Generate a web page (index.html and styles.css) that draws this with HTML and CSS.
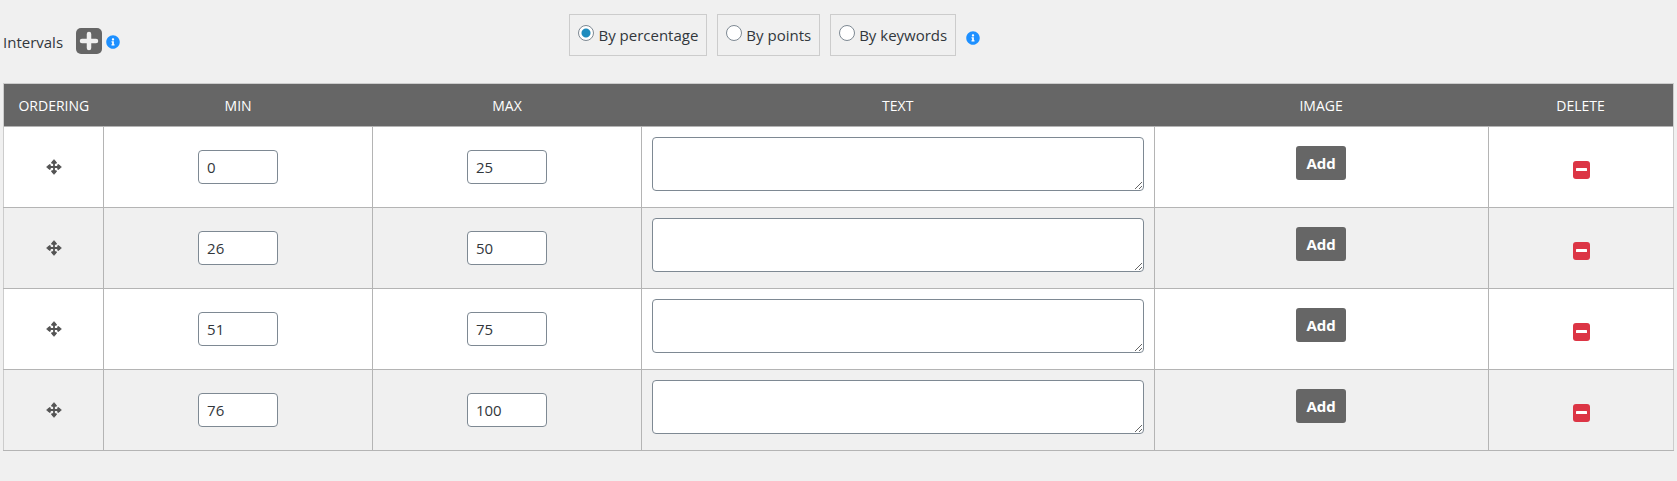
FILE: index.html
```html
<!DOCTYPE html>
<html lang="en">
<head>
<meta charset="utf-8">
<title>Intervals</title>
<link rel="stylesheet" href="styles.css">
</head>
<body>
<svg class="sprite" aria-hidden="true">
  <symbol id="info" viewBox="0 0 512 512"><circle cx="256" cy="256" r="240" fill="#fff"/><path fill="currentColor" d="M256 8C119.043 8 8 119.083 8 256c0 136.997 111.043 248 248 248s248-111.003 248-248C504 119.083 392.957 8 256 8zm0 110c23.196 0 42 18.804 42 42s-18.804 42-42 42-42-18.804-42-42 18.804-42 42-42zm56 254c0 6.627-5.373 12-12 12h-88c-6.627 0-12-5.373-12-12v-24c0-6.627 5.373-12 12-12h12v-64h-12c-6.627 0-12-5.373-12-12v-24c0-6.627 5.373-12 12-12h64c6.627 0 12 5.373 12 12v100h12c6.627 0 12 5.373 12 12v24z"/></symbol>
  <symbol id="move" viewBox="0 0 16 16"><path d="M8 2v12M2 8h12" stroke="currentColor" stroke-width="1.800"/><path fill="currentColor" stroke="currentColor" stroke-width="1" stroke-linejoin="round" d="M8 .7l2.300 2.600v.9H5.700v-.9zM8 15.300l2.300-2.600v-.9H5.700v.9zM.7 8l2.600-2.300h.9v4.600h-.9zM15.300 8l-2.600-2.300h-.9v4.600h.9z"/></symbol>
  <symbol id="plus" viewBox="0 0 26 26"><rect width="26" height="26" rx="5" fill="currentColor"/><path d="M13 5.500v15M5.500 13h15" stroke="#f0f0f0" stroke-width="4"/><path d="M13 6v14M6 13h14" stroke="#f0f0f0" stroke-width="4.500" stroke-linecap="round"/></symbol>
  <symbol id="minus" viewBox="0 0 18 18"><rect x="1" width="17" height="18" rx="3" fill="currentColor"/><rect x="4" y="7" width="11" height="3" rx="0.500" fill="#fff"/></symbol>
</svg>
<main class="page">
  <header class="toolbar">
    <div class="title">
      <span class="title-text">Intervals</span>
      <button class="icon-button" type="button" aria-label="Add interval"><svg class="icon-plus"><use href="#plus"/></svg></button>
      <a class="info" href="#" aria-label="About intervals"><svg class="icon-info"><use href="#info"/></svg></a>
    </div>
    <div class="modes">
      <label class="mode"><input class="radio" type="radio" name="mode" checked><span>By percentage</span></label>
      <label class="mode"><input class="radio" type="radio" name="mode"><span>By points</span></label>
      <label class="mode"><input class="radio" type="radio" name="mode"><span>By keywords</span></label>
      <a class="info" href="#" aria-label="About calculation modes"><svg class="icon-info"><use href="#info"/></svg></a>
    </div>
  </header>
  <table class="intervals">
    <colgroup><col class="col-order"><col class="col-number"><col class="col-number"><col class="col-text"><col class="col-image"><col class="col-delete"></colgroup>
    <thead>
      <tr><th>ORDERING</th><th>MIN</th><th>MAX</th><th>TEXT</th><th>IMAGE</th><th>DELETE</th></tr>
    </thead>
    <tbody>
      <tr>
        <td><svg class="icon-move"><use href="#move"/></svg></td>
        <td><input class="number" type="text" value="0" aria-label="Min"></td>
        <td><input class="number" type="text" value="25" aria-label="Max"></td>
        <td><textarea class="text" aria-label="Text"></textarea></td>
        <td class="image-cell"><button class="add" type="button">Add</button></td>
        <td class="delete-cell"><button class="icon-button" type="button" aria-label="Delete"><svg class="icon-minus"><use href="#minus"/></svg></button></td>
      </tr>
      <tr>
        <td><svg class="icon-move"><use href="#move"/></svg></td>
        <td><input class="number" type="text" value="26" aria-label="Min"></td>
        <td><input class="number" type="text" value="50" aria-label="Max"></td>
        <td><textarea class="text" aria-label="Text"></textarea></td>
        <td class="image-cell"><button class="add" type="button">Add</button></td>
        <td class="delete-cell"><button class="icon-button" type="button" aria-label="Delete"><svg class="icon-minus"><use href="#minus"/></svg></button></td>
      </tr>
      <tr>
        <td><svg class="icon-move"><use href="#move"/></svg></td>
        <td><input class="number" type="text" value="51" aria-label="Min"></td>
        <td><input class="number" type="text" value="75" aria-label="Max"></td>
        <td><textarea class="text" aria-label="Text"></textarea></td>
        <td class="image-cell"><button class="add" type="button">Add</button></td>
        <td class="delete-cell"><button class="icon-button" type="button" aria-label="Delete"><svg class="icon-minus"><use href="#minus"/></svg></button></td>
      </tr>
      <tr>
        <td><svg class="icon-move"><use href="#move"/></svg></td>
        <td><input class="number" type="text" value="76" aria-label="Min"></td>
        <td><input class="number" type="text" value="100" aria-label="Max"></td>
        <td><textarea class="text" aria-label="Text"></textarea></td>
        <td class="image-cell"><button class="add" type="button">Add</button></td>
        <td class="delete-cell"><button class="icon-button" type="button" aria-label="Delete"><svg class="icon-minus"><use href="#minus"/></svg></button></td>
      </tr>
    </tbody>
  </table>
</main>
</body>
</html>
```
FILE: styles.css
```css
* { box-sizing: border-box; }
body {
  margin: 0;
  background: #f0f0f0;
  color: #32373c;
  font: 15px/24px "Open Sans", "Noto Sans", sans-serif;
}
svg { display: block; }
.sprite { display: none; }
.page { padding: 14px 3px 30px; }
.toolbar { display: flex; margin-bottom: 27px; }
.title {
  display: flex;
  align-items: center;
  flex: 0 0 33.9%;
  padding-top: 14px;
}
.title-text { margin-right: 13px; }
.icon-button {
  padding: 0;
  border: 0;
  background: none;
  cursor: pointer;
}
.title .icon-button { margin: 0 4px 2px 0; }
.icon-plus { width: 26px; height: 26px; color: #666; }
.info { color: #1e90ff; }
.icon-info { width: 14px; height: 14px; }
.modes { display: flex; align-items: center; gap: 10px; }
.mode {
  display: flex;
  align-items: center;
  gap: 4px;
  padding: 8px;
  border: 1px solid #ccc;
}
.radio {
  appearance: none;
  width: 16px;
  height: 16px;
  margin: 0 0 4px;
  border: 1px solid #7e8993;
  border-radius: 50%;
  background: #fff;
}
.radio:checked { background: radial-gradient(circle, #1e8cbe 4px, #fff 5px); }
.modes .info { padding-top: 6px; }
.intervals {
  width: 100%;
  table-layout: fixed;
  border-collapse: collapse;
  border: 1px solid #ccc;
}
.col-order { width: 6%; }
.col-number { width: 16.1%; }
.col-text { width: 30.7%; }
.col-image { width: 20%; }
.col-delete { width: 11.1%; }
th {
  height: 43px;
  padding: 1px 0 0;
  background: #666;
  color: #fff;
  font-size: 14px;
  font-weight: 400;
}
td {
  height: 81px;
  padding: 10px;
  border: 1px solid #b4b4b4;
  text-align: center;
  vertical-align: middle;
}
tbody tr:nth-child(odd) { background: #fff; }
td:first-child { border-left-color: #ccc; }
td:last-child { border-right-color: #ccc; }
.icon-move { width: 16px; height: 16px; margin: 0 auto; color: #555; }
.number {
  width: 80px;
  height: 34px;
  padding: 0 8px;
  border: 1px solid #7e8993;
  border-radius: 4px;
  background: #fff;
  color: #32373c;
  font: inherit;
}
.text {
  display: block;
  width: 100%;
  height: 54px;
  margin-bottom: 6px;
  padding: 4px 8px;
  border: 1px solid #7e8993;
  border-radius: 4px;
  background: #fff;
  font: inherit;
  resize: vertical;
}
.image-cell { padding-bottom: 18px; }
.add {
  height: 34px;
  padding: 0 10px;
  border: 0;
  border-radius: 3px;
  background: #666;
  color: #fff;
  font: inherit;
  font-weight: 700;
}
.delete-cell .icon-button { display: block; margin: 6px auto 0; }
.icon-minus { width: 18px; height: 18px; color: #dc3545; }
```
